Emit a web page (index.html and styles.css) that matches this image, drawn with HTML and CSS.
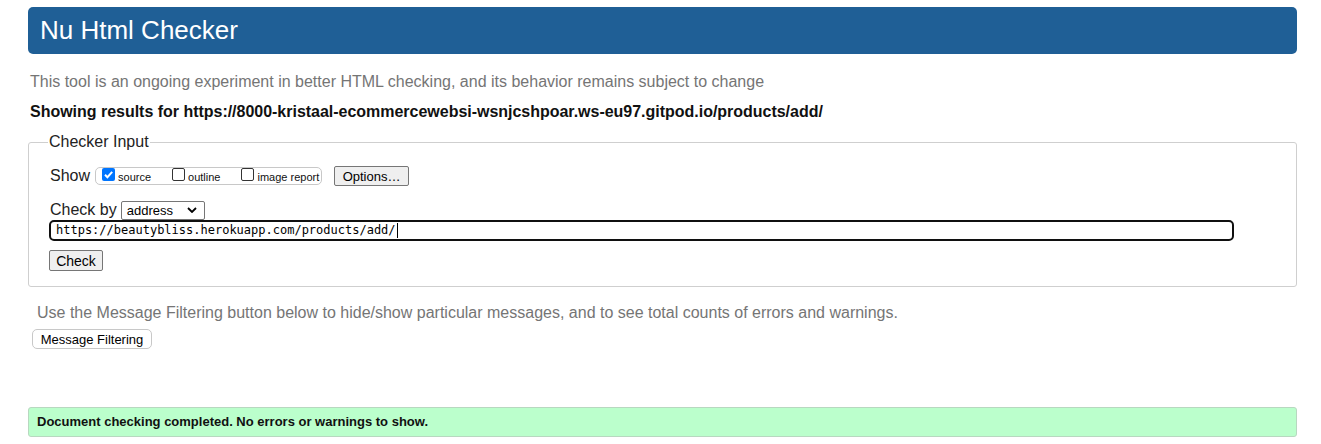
FILE: index.html
```html
<!DOCTYPE html>
<html lang="en">
<head>
<meta charset="utf-8">
<title>Nu Html Checker</title>
<link rel="stylesheet" href="styles.css">
</head>
<body>
<div class="page">
  <h1 class="title">Nu Html Checker</h1>
  <p class="intro">This tool is an ongoing experiment in better HTML checking, and its behavior remains subject to change</p>
  <p class="results">Showing results for https://8000-kristaal-ecommercewebsi-wsnjcshpoar.ws-eu97.gitpod.io/products/add/</p>
  <fieldset class="checker">
    <legend class="legend">Checker Input</legend>
    <div class="row show-row">
      <span class="label">Show</span>
      <span class="opts">
        <label class="opt"><span class="cb checked"><svg viewBox="0 0 13 13" width="13" height="13"><rect x="0" y="0" width="13" height="13" rx="2" fill="#0075ff"/><path d="M3 6.8 L5.4 9.2 L10.2 3.8" fill="none" stroke="#fff" stroke-width="2"/></svg></span>source</label>
        <label class="opt"><span class="cb"></span>outline</label>
        <label class="opt"><span class="cb"></span>image report</label>
      </span>
      <button class="btn options">Options…</button>
    </div>
    <div class="row by-row">
      <span class="label">Check by</span>
      <span class="select">address<svg viewBox="0 0 10 6" width="10" height="6"><path d="M1 1 L5 5 L9 1" fill="none" stroke="#000" stroke-width="1.8"/></svg></span>
    </div>
    <div class="url">https://beautybliss.herokuapp.com/products/add/<span class="caret"></span></div>
    <button class="btn check">Check</button>
  </fieldset>
  <p class="filter-info">Use the Message Filtering button below to hide/show particular messages, and to see total counts of errors and warnings.</p>
  <button class="btn filter">Message Filtering</button>
  <div class="success">Document checking completed. No errors or warnings to show.</div>
</div>
</body>
</html>
```
FILE: styles.css
```css
html, body {
  margin: 0;
  padding: 0;
  background: #fff;
}
body {
  font-family: "Liberation Sans", Arial, sans-serif;
  color: #000;
}
.page {
  padding: 7px 24px 0 28px;
}
.title {
  margin: 0;
  height: 47px;
  box-sizing: border-box;
  background: #1f5f96;
  color: #fff;
  border-radius: 5px;
  font-weight: normal;
  font-size: 26px;
  line-height: 47px;
  padding-left: 12px;
}
.intro {
  margin: 18px 0 0 2px;
  font-size: 16px;
  line-height: 20px;
  color: #757575;
}
.results {
  margin: 10px 0 0 2px;
  font-size: 16px;
  line-height: 20px;
  font-weight: bold;
  color: #111;
  letter-spacing: -0.02px;
}
.checker {
  margin: 11px 0 0 0;
  border: 1px solid #cfcfcf;
  border-radius: 3px;
  padding: 14px 0 14px 21px;
  height: 154px;
  box-sizing: border-box;
}
.legend {
  padding: 0 1px;
  font-size: 16px;
  color: #222;
  margin-left: -2px;
}
.row {
  display: flex;
  align-items: center;
}
.label {
  font-size: 16px;
  color: #222;
}
.show-row {
  margin-top: 0;
  height: 22px;
}
.opts {
  display: flex;
  align-items: center;
  flex-shrink: 0;
  margin-left: 5px;
  height: 18px;
  box-sizing: border-box;
  border: 1px solid #c8c8c8;
  border-radius: 5px;
  padding: 2px 3px 0 6px;
  width: 227px;
  white-space: nowrap;
}
.opt {
  display: flex;
  align-items: center;
  flex-shrink: 0;
  white-space: nowrap;
  font-size: 11px;
  margin-right: 21px;
  color: #111;
}
.opt:last-child { margin-right: 0; }
.cb {
  width: 11px;
  height: 11px;
  border: 1px solid #333;
  border-radius: 2px;
  margin-right: 3px;
  box-sizing: content-box;
  display: inline-block;
  flex-shrink: 0;
  transform: translateY(-3px);
}
.cb.checked {
  border: none;
  width: 13px;
  height: 13px;
  margin-right: 3px;
}
.cb svg { display: block; }
.btn {
  font-family: "Liberation Sans", Arial, sans-serif;
  font-size: 13px;
  color: #000;
  background: #efefef;
  border: 1px solid #767676;
  border-radius: 2px;
  padding: 0 6px;
  height: 20px;
  white-space: nowrap;
}
.options {
  margin-left: 12px;
  width: 75px;
  flex-shrink: 0;
}
.by-row {
  margin-top: 13px;
  height: 20px;
}
.select {
  display: flex;
  align-items: center;
  justify-content: space-between;
  margin-left: 4px;
  width: 84px;
  height: 19px;
  box-sizing: border-box;
  border: 1px solid #767676;
  border-radius: 2px;
  padding: 0 7px 0 5px;
  font-size: 13px;
}
.url {
  margin-top: 0;
  margin-left: -1px;
  width: 1185px;
  height: 21px;
  box-sizing: border-box;
  border: 2px solid #101010;
  border-radius: 5px;
  font-family: "DejaVu Sans Mono", "Liberation Mono", monospace;
  font-size: 12px;
  line-height: 17px;
  padding-left: 5px;
  display: flex;
  align-items: center;
}
.caret {
  display: inline-block;
  width: 1px;
  height: 15px;
  background: #000;
  margin-left: 1px;
}
.check {
  margin-top: 9px;
  margin-left: -1px;
  width: 54px;
  height: 21px;
  font-size: 14px;
  padding: 0 4px;
}
.filter-info {
  margin: 16px 0 0 9px;
  font-size: 16px;
  line-height: 20px;
  color: #757575;
}
.filter {
  margin: 6px 0 0 4px;
  height: 20px;
  background: #fff;
  border: 1px solid #c8c8c8;
  border-radius: 5px;
  font-size: 13px;
  padding: 0 6px;
  width: 120px;
}
.success {
  margin-top: 58px;
  height: 30px;
  box-sizing: border-box;
  background: #bbffcc;
  border: 1px solid #b8d8c0;
  border-radius: 3px;
  font-size: 13px;
  font-weight: bold;
  line-height: 28px;
  padding-left: 8px;
  color: #111;
}
```
